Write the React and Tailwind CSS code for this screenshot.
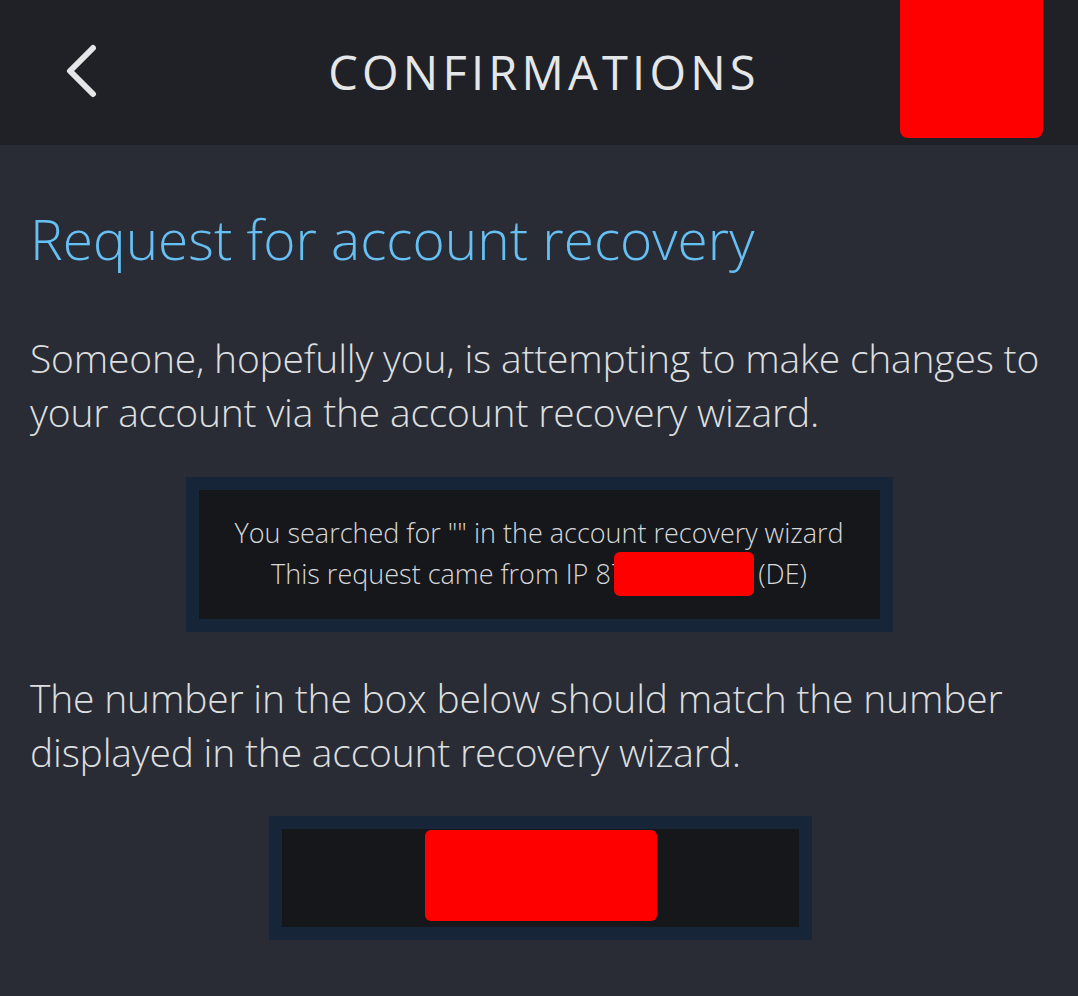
import React from "react";

function BackChevron() {
  return (
    <svg width="34" height="54" viewBox="0 0 34 54" fill="none">
      <path d="M29 4 L6 27 L29 50" stroke="#e4e6e8" strokeWidth="6" strokeLinecap="round" strokeLinejoin="round" />
    </svg>
  );
}

export default function App() {
  return (
    <div className="min-h-[996px] w-[1078px] bg-[#292c35] text-[#dcdedf] font-['Open_Sans',sans-serif] font-light overflow-hidden">
      {/* header */}
      <div className="relative h-[145px] bg-[#202126] flex items-center justify-center">
        <div className="absolute left-[64px] top-[44px]">
          <BackChevron />
        </div>
        <h1 className="text-[47px] font-normal tracking-[0.09em] text-[#e4e6e8] leading-none -mt-[1px] ml-[10px]">
          CONFIRMATIONS
        </h1>
        <div className="absolute left-[900px] top-0 w-[143px] h-[138px] bg-[#ff0000] rounded-b-[8px]"></div>
      </div>

      <div className="px-[30px] pt-[58px]">
        <h2 className="text-[55px] text-[#66c0f4] leading-[72px]">Request for account recovery</h2>

        <p className="mt-[56px] text-[39px] leading-[54px] tracking-[-0.005em]">
          Someone, hopefully you, is attempting to make changes to your account via the account recovery wizard.
        </p>

        <div className="flex justify-center mt-[38px]">
          <div className="w-[707px] h-[155px] border-[13px] border-[#172538] bg-[#16171b] flex flex-col items-center justify-center text-[27px] leading-[38px] text-[#d6d8da]">
            <div>You searched for "" in the account recovery wizard</div>
            <div className="flex items-center">
              <span>This request came from IP 87</span>
              <span className="inline-block w-[140px] h-[44px] bg-[#ff0000] rounded-[6px] -ml-[12px] mr-[4px]"></span>
              <span>(DE)</span>
            </div>
          </div>
        </div>

        <p className="mt-[39px] text-[39px] leading-[54px] tracking-[-0.005em]">
          The number in the box below should match the number displayed in the account recovery wizard.
        </p>

        <div className="flex justify-center mt-[37px] pl-[2px]">
          <div className="w-[543px] h-[124px] border-[13px] border-[#172538] bg-[#16171b] flex items-start pl-[143px]">
            <div className="w-[232px] h-[91px] mt-[1px] bg-[#ff0000] rounded-[6px]"></div>
          </div>
        </div>
      </div>
    </div>
  );
}
